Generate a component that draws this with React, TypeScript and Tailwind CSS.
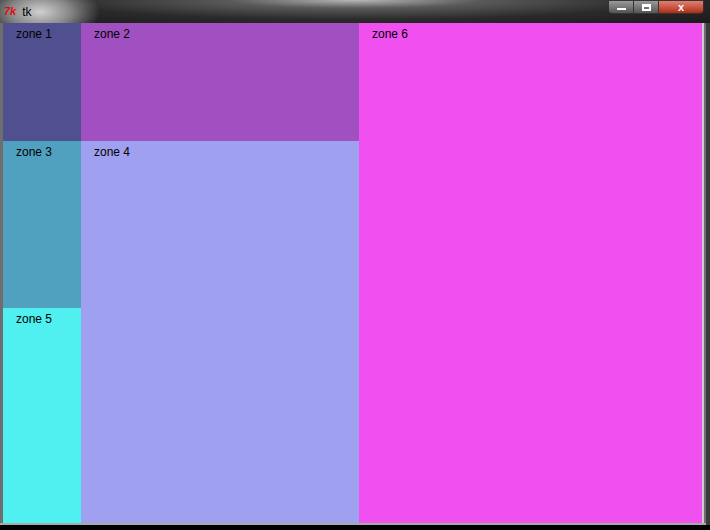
export default function App() {
  const lbl = "absolute left-[13px] top-[4px] text-[12px] text-black leading-[14px]";
  return (
    <div className="w-[710px] h-[530px] bg-[#3a3a3a] flex flex-col overflow-hidden" style={{ fontFamily: "'Liberation Sans', Arial, sans-serif" }}>
      <div className="h-[23px] flex items-center relative bg-[radial-gradient(ellipse_60px_30px_at_40px_12px,#d0d0d0_0%,#888_50%,transparent_100%),radial-gradient(ellipse_at_50%_0%,#b8b8b8_0%,#5a5a5a_25%,#2a2a2a_60%,#1a1a1a_100%)]">
        <span className="ml-[4px] text-[11px] font-bold italic text-[#e01010]">7k</span>
        <span className="ml-[6px] text-[12px] text-black">tk</span>
        <div className="absolute right-[6px] top-0 flex h-[14px] border border-[#333] rounded-b-[4px] overflow-hidden">
          <div className="w-[25px] bg-gradient-to-b from-[#9a9a9a] to-[#555] flex items-end justify-center pb-[3px] border-r border-[#333]"><div className="w-[9px] h-[2px] bg-white" /></div>
          <div className="w-[25px] bg-gradient-to-b from-[#9a9a9a] to-[#555] flex items-center justify-center border-r border-[#333]"><div className="w-[9px] h-[7px] border-2 border-white border-t-[3px]" /></div>
          <div className="w-[44px] bg-gradient-to-b from-[#e08070] to-[#b02a10] flex items-center justify-center text-white text-[11px] font-bold">x</div>
        </div>
      </div>
      <div className="flex pl-[3px] bg-[#6e6e6e] w-[706px] h-[500px]">
        <div className="w-[78px] flex flex-col">
          <div className="h-[118px] bg-[#505090] relative"><span className={lbl}>zone 1</span></div>
          <div className="h-[167px] bg-[#50a0c0] relative"><span className={lbl}>zone 3</span></div>
          <div className="flex-1 bg-[#50f0f0] relative"><span className={lbl}>zone 5</span></div>
        </div>
        <div className="w-[278px] flex flex-col">
          <div className="h-[118px] bg-[#a050c0] relative"><span className={lbl}>zone 2</span></div>
          <div className="flex-1 bg-[#a0a0f0] relative"><span className={lbl}>zone 4</span></div>
        </div>
        <div className="w-[345px] bg-[#f050f0] relative border-r-2 border-[#ccc]"><span className={lbl}>zone 6</span></div>
      </div>
      <div className="h-[2px] w-[706px] bg-[#aaa]" />
      <div className="flex-1 bg-black" />
    </div>
  );
}
